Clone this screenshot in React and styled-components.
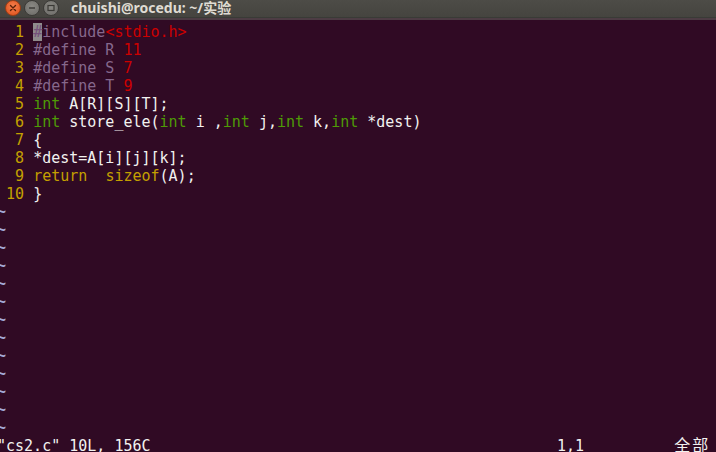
import React from "react";
import styled, { createGlobalStyle } from "styled-components";

const Global = createGlobalStyle`
  html, body { margin: 0; padding: 0; width: 716px; height: 452px; overflow: hidden; background: #300a24; }
  #root { width: 716px; height: 452px; }
`;

const Window = styled.div`
  display: flex;
  flex-direction: column;
  width: 716px;
  height: 452px;
  overflow: hidden;
  background: #300a24;
`;

const TitleBar = styled.div`
  flex: 0 0 17px;
  display: flex;
  align-items: center;
  background: linear-gradient(#4d4c47, #45443f);
  border-bottom: 1px solid #393b36;
  position: relative;
`;

const Buttons = styled.div`
  display: flex;
  gap: 3px;
  margin-left: 5px;
  align-items: center;
  margin-top: -2px;
`;

const WinButton = styled.div`
  width: 16px;
  height: 16px;
  border-radius: 50%;
  display: flex;
  align-items: center;
  justify-content: center;
  background: ${(p) =>
    p.$close
      ? "radial-gradient(circle at 50% 40%, #f5814f, #dd4d17)"
      : "radial-gradient(circle at 50% 40%, #8a8984, #6b6a66)"};
  border: 1px solid ${(p) => (p.$close ? "#9c3d14" : "#3b3a37")};
  box-sizing: border-box;
`;

const Title = styled.div`
  margin-left: 12px;
  font-family: "Noto Sans", "Noto Sans CJK SC", sans-serif;
  font-weight: 700;
  font-size: 14px;
  line-height: 17px;
  color: #dfdbd2;
  margin-top: -3px;
`;

const Term = styled.div`
  flex: 1;
  border-top: 2px solid #4d3c44;
  padding-top: 3px;
  margin-left: -3px;
  overflow: hidden;
  font-family: "DejaVu Sans Mono", "Noto Sans CJK SC", monospace;
  font-size: 15px;
  color: #f2f2f0;
`;

const Row = styled.div`
  height: 18px;
  line-height: 18px;
  white-space: pre;
`;

const C = styled.span`
  color: ${(p) => p.$c};
  font-weight: ${(p) => (p.$bold ? 700 : 400)};
`;

const Cursor = styled.span`
  background: #8f8a8c;
  color: #75507b;
`;

const StatusRow = styled.div`
  height: 18px;
  line-height: 18px;
  white-space: pre;
  display: grid;
  grid-template-columns: 62ch 13ch auto;
`;

const Wide = styled.span`
  font-size: 16px;
  letter-spacing: 2px;
`;

const NR = "#c4a000";
const PRE = "#86688c";
const RED = "#cc0000";
const GRN = "#4e9a06";
const STM = "#c4a000";
const TILDE = "#a4aad8";

const lines = [
  [["  1 ", NR], ["CURSOR#"], ["include", PRE], ["<stdio.h>", RED]],
  [["  2 ", NR], ["#define R ", PRE], ["11", RED]],
  [["  3 ", NR], ["#define S ", PRE], ["7", RED]],
  [["  4 ", NR], ["#define T ", PRE], ["9", RED]],
  [["  5 ", NR], ["int", GRN], [" A[R][S][T];"]],
  [["  6 ", NR], ["int", GRN], [" store_ele("], ["int", GRN], [" i ,"], ["int", GRN], [" j,"], ["int", GRN], [" k,"], ["int", GRN], [" *dest)"]],
  [["  7 ", NR], ["{"]],
  [["  8 ", NR], ["*dest=A[i][j][k];"]],
  [["  9 ", NR], ["return", STM], ["  "], ["sizeof", STM], ["(A);"]],
  [[" 10 ", NR], ["}"]],
];

function CloseGlyph() {
  return (
    <svg width="8" height="8" viewBox="0 0 8 8">
      <path d="M1.5 1.5 L6.5 6.5 M6.5 1.5 L1.5 6.5" stroke="#5a2008" strokeWidth="1.4" strokeLinecap="round" />
    </svg>
  );
}
function MinGlyph() {
  return (
    <svg width="8" height="8" viewBox="0 0 8 8">
      <path d="M1 4 H7" stroke="#3a3935" strokeWidth="1.4" />
    </svg>
  );
}
function MaxGlyph() {
  return (
    <svg width="8" height="8" viewBox="0 0 8 8">
      <rect x="1" y="1.5" width="6" height="5" fill="none" stroke="#3a3935" strokeWidth="1.2" />
    </svg>
  );
}

export default function App() {
  return (
    <Window>
      <Global />
      <TitleBar>
        <Buttons>
          <WinButton $close><CloseGlyph /></WinButton>
          <WinButton><MinGlyph /></WinButton>
          <WinButton><MaxGlyph /></WinButton>
        </Buttons>
        <Title>chuishi@rocedu: ~/实验</Title>
      </TitleBar>
      <Term>
        {lines.map((segs, i) => (
          <Row key={i}>
            {segs.map(([t, c], j) =>
              t.startsWith("CURSOR") ? (
                <Cursor key={j}>{t.slice(6)}</Cursor>
              ) : c ? (
                <C key={j} $c={c}>{t}</C>
              ) : (
                <span key={j}>{t}</span>
              )
            )}
          </Row>
        ))}
        {Array.from({ length: 13 }).map((_, i) => (
          <Row key={"t" + i}>
            <C $c={TILDE} $bold>~</C>
          </Row>
        ))}
        <StatusRow>
          <span>"cs2.c" 10L, 156C</span>
          <span>1,1</span>
          <Wide>全部</Wide>
        </StatusRow>
      </Term>
    </Window>
  );
}
